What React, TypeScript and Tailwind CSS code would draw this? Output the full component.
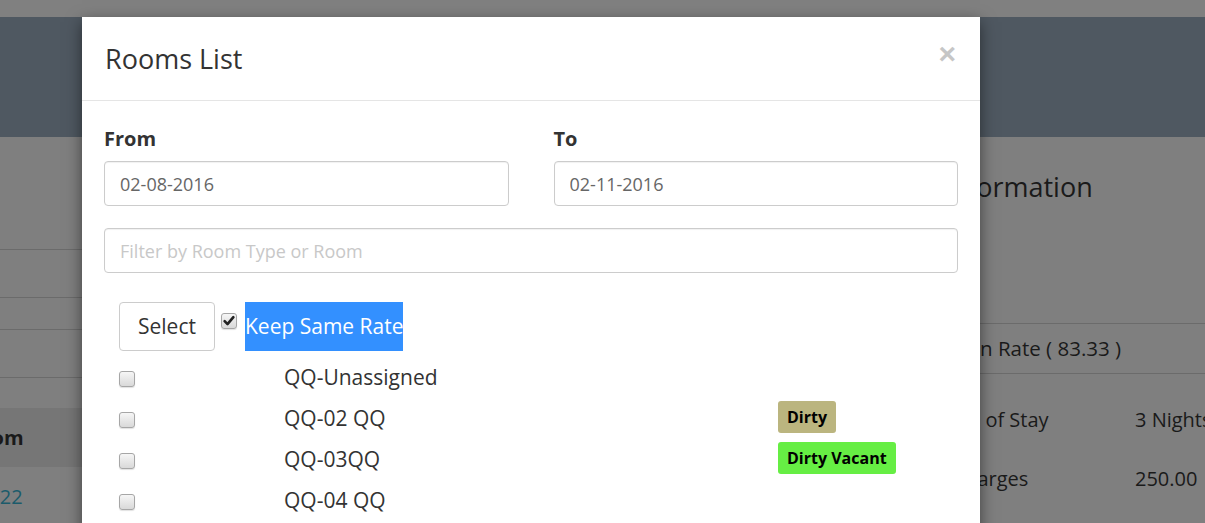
const Box = ({ checked = false }: { checked?: boolean }) => {
  return (
    <span className="w-4 h-4 shrink-0 rounded-[3px] border border-[#a6a6a6] bg-linear-to-b from-[#f6f6f6] to-[#d9d9d9] shadow-[0_1px_1px_rgba(0,0,0,0.12)] flex items-center justify-center">
      {checked && (
        <svg viewBox="0 0 16 16" className="w-[14px] h-[14px]">
          <path d="M3 8.2 L6.3 11.6 L13 3.6" fill="none" stroke="#222" strokeWidth={3} strokeLinecap="round" strokeLinejoin="round" />
        </svg>
      )}
    </span>
  );
};

const rooms = [
  { name: "QQ-Unassigned", badge: "", color: "" },
  { name: "QQ-02 QQ", badge: "Dirty", color: "bg-[#bbb57f]" },
  { name: "QQ-03QQ", badge: "Dirty Vacant", color: "bg-[#66ee44]" },
  { name: "QQ-04 QQ", badge: "", color: "" },
];

export default function App() {
  return (
    <div className="relative w-[1205px] h-[523px] overflow-hidden bg-[#7f7f7f] font-['Open_Sans',sans-serif] text-[#333]">
      {/* page behind the backdrop */}
      <div className="flex flex-col">
        <div className="h-[17px] bg-[#808080]" />
        <div className="h-[120px] bg-[#4f5861]" />
        <div className="flex">
          <div className="w-[300px] shrink-0 flex flex-col text-[20px] text-[#1a1a1a]">
            <div className="h-[113px] border-b border-[#6b6b6b]" />
            <div className="h-[48px] border-b border-[#6b6b6b]" />
            <div className="h-[32px] border-b border-[#6b6b6b]" />
            <div className="h-[48px] border-b border-[#6b6b6b]" />
            <div className="h-[30px]" />
            <div className="h-[59px] bg-[#767676] flex items-center font-bold">
              <span className="-ml-[34px]">Room</span>
            </div>
            <div className="h-[60px] flex items-center text-[#1b5b6b]">
              <span className="-ml-[23px]">1022</span>
            </div>
          </div>
          <div className="w-[600px] shrink-0" />
          <div className="flex-1 min-w-0 overflow-hidden flex flex-col text-[20px] text-[#1a1a1a]">
            <div className="h-[100px] pl-[43px] pt-[30px] text-[27px] whitespace-nowrap">Information</div>
            <div className="h-[87px] border-b border-[#6b6b6b]" />
            <div className="h-[50px] border-b border-[#6b6b6b] flex items-center pl-[40px] text-[20.5px] whitespace-nowrap">Open Rate ( 83.33 )</div>
            <div className="mt-[32px] h-[28px] flex items-center">
              <span className="w-[235px] shrink-0 pl-[16px] whitespace-nowrap">Length of Stay</span>
              <span className="shrink-0 whitespace-nowrap">3 Nights</span>
            </div>
            <div className="mt-[31px] h-[28px] flex items-center">
              <span className="w-[235px] shrink-0 pl-[1px] whitespace-nowrap">Total Charges</span>
              <span className="shrink-0">250.00</span>
            </div>
          </div>
        </div>
      </div>

      {/* modal */}
      <div className="absolute left-[82px] top-[17px] w-[898px] h-[540px] bg-white shadow-[0_5px_15px_rgba(0,0,0,0.5)]">
        <div className="h-[84px] border-b border-[#e5e5e5] flex items-center justify-between pl-[23px] pr-[24px]">
          <h4 className="text-[27px] leading-none">Rooms List</h4>
          <span className="text-[30px] font-bold leading-none text-[#c6c6c6] font-['Liberation_Sans',sans-serif] -mt-[10px]">×</span>
        </div>
        <div className="px-[22px] pt-[24px]">
          <div className="grid grid-cols-2 gap-x-[45px]">
            <div>
              <label className="block text-[20px] font-bold leading-[28px] mb-[8px]">From</label>
              <input readOnly value="02-08-2016" className="w-full h-[45px] border border-[#cccccc] rounded-[4px] px-[15px] text-[18px] text-[#666] outline-none shadow-[inset_0_1px_1px_rgba(0,0,0,0.06)]" />
            </div>
            <div>
              <label className="block text-[20px] font-bold leading-[28px] mb-[8px]">To</label>
              <input readOnly value="02-11-2016" className="w-full h-[45px] border border-[#cccccc] rounded-[4px] px-[15px] text-[18px] text-[#666] outline-none shadow-[inset_0_1px_1px_rgba(0,0,0,0.06)]" />
            </div>
          </div>
          <input placeholder="Filter by Room Type or Room" className="mt-[22px] w-full h-[45px] border border-[#cccccc] rounded-[4px] px-[15px] text-[18px] text-[#666] placeholder:text-[#c8c8c8] outline-none shadow-[inset_0_1px_1px_rgba(0,0,0,0.06)]" />

          <div className="mt-[29px] pl-[15px] flex items-start">
            <button className="w-[96px] h-[49px] border border-[#cccccc] rounded-[4px] bg-white text-[21px] text-[#333]">Select</button>
            <span className="ml-[6px] mt-[11px]"><Box checked /></span>
            <span className="ml-[8px] h-[49px] w-[158px] bg-[#3390ff] text-white text-[21px] flex items-center whitespace-nowrap">Keep Same Rate</span>
          </div>

          <div className="mt-[6px] pl-[15px] flex flex-col">
            {rooms.map((r) => (
              <div key={r.name} className="h-[41px] grid grid-cols-[165px_494px_auto] items-center">
                <span className="pt-[2px]"><Box /></span>
                <span className="text-[21px]">{r.name}</span>
                <span>
                  {r.badge && (
                    <span className={`inline-flex items-center h-[32px] mb-[4px] px-[9px] rounded-[3px] text-[16px] font-bold text-black ${r.color}`}>{r.badge}</span>
                  )}
                </span>
              </div>
            ))}
          </div>
        </div>
      </div>
    </div>
  );
}
